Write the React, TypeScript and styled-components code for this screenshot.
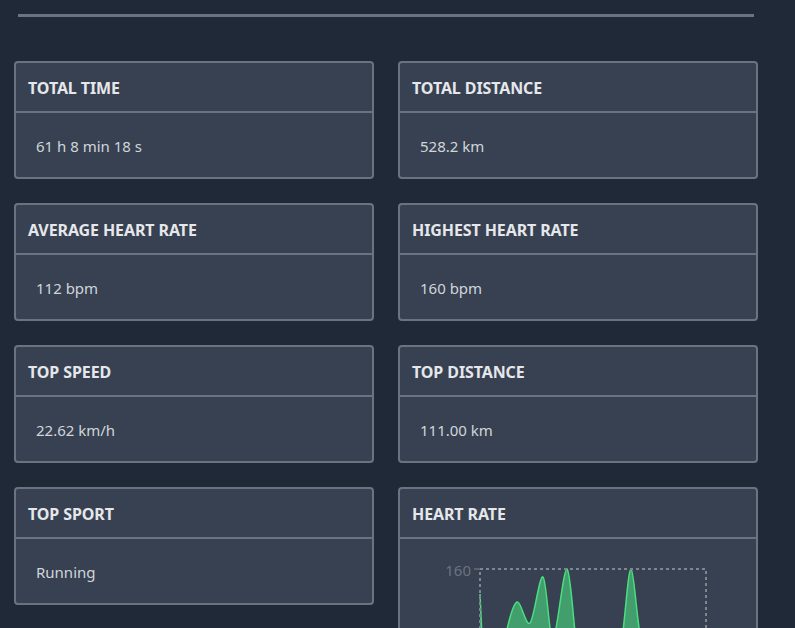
import React from "react";
import styled, { createGlobalStyle } from "styled-components";

const Global = createGlobalStyle`
  html, body { margin: 0; padding: 0; background: #1f2937; }
  body { font-family: "Noto Sans", "Open Sans", sans-serif; }
`;

const Page = styled.div`
  padding: 14px 14px 40px 14px;
  width: 744px;
`;

const Rule = styled.div`
  height: 3px;
  margin: 0 4px;
  background: #6b7280;
`;

const Grid = styled.div`
  margin-top: 44px;
  display: grid;
  grid-template-columns: 360px 360px;
  column-gap: 24px;
  row-gap: 24px;
  align-items: start;
`;

const Card = styled.div`
  background: #374151;
  border: 2px solid #6b7280;
  border-radius: 4px;
  box-sizing: border-box;
`;

const CardHeader = styled.div`
  height: 50px;
  box-sizing: border-box;
  display: flex;
  align-items: center;
  padding: 2px 12px 0 12px;
  border-bottom: 2px solid #6b7280;
  color: #e5e7eb;
  font-weight: 700;
  font-size: 16px;
  letter-spacing: -0.1px;
  text-transform: uppercase;
`;

const CardBody = styled.div`
  height: 64px;
  box-sizing: border-box;
  padding: 2px 20px 0 20px;
  display: flex;
  align-items: center;
  color: #d1d5db;
  font-size: 15px;
`;

const ChartBody = styled.div`
  height: 260px;
`;

const stats: [string, string][] = [
  ["Total time", "61 h 8 min 18 s"],
  ["Total distance", "528.2 km"],
  ["Average heart rate", "112 bpm"],
  ["Highest heart rate", "160 bpm"],
  ["Top speed", "22.62 km/h"],
  ["Top distance", "111.00 km"],
  ["Top sport", "Running"],
];

const pts: [number, number][] = [
  [80, 55], [85, 140], [95, 165], [106, 95], [117, 63], [130, 84], [143, 38],
  [153, 100], [167, 30], [178, 115], [195, 170], [214, 160], [223, 92], [231, 30],
  [240, 95], [255, 170], [275, 150], [290, 180], [306, 140],
];

function spline(p: [number, number][]) {
  let d = `M${p[0][0]},${p[0][1]}`;
  for (let i = 0; i < p.length - 1; i++) {
    const p0 = p[i - 1] || p[i];
    const p1 = p[i];
    const p2 = p[i + 1];
    const p3 = p[i + 2] || p2;
    const t = 0.16;
    const c1x = p1[0] + (p2[0] - p0[0]) * t;
    let c1y = p1[1] + (p2[1] - p0[1]) * t;
    const c2x = p2[0] - (p3[0] - p1[0]) * t;
    let c2y = p2[1] - (p3[1] - p1[1]) * t;
    c1y = Math.max(30, c1y);
    c2y = Math.max(30, c2y);
    d += ` C${c1x},${c1y} ${c2x},${c2y} ${p2[0]},${p2[1]}`;
  }
  return d;
}

const HeartChart = () => {
  const line = spline(pts);
  const area = `${line} L306,230 L80,230 Z`;
  return (
    <svg width="356" height="260" viewBox="0 0 356 260">
      <path d={area} fill="#4ade80" fillOpacity={0.6} stroke="none" />
      <path d={line} fill="none" stroke="#4ade80" strokeWidth={1.5} />
      <rect x="80" y="30" width="226" height="200" fill="none" stroke="#80858e" strokeWidth={2} strokeDasharray="3 3" />
      <line x1="74" y1="30" x2="80" y2="30" stroke="#80858e" strokeWidth={1} />
      <text x="71" y="37" textAnchor="end" fill="#6b7280" fontSize="15" fontFamily="Noto Sans, sans-serif">160</text>
    </svg>
  );
};

export default function App() {
  return (
    <>
      <Global />
      <Page>
        <Rule />
        <Grid>
          {stats.map(([t, v]) => (
            <Card key={t}>
              <CardHeader>{t}</CardHeader>
              <CardBody>{v}</CardBody>
            </Card>
          ))}
          <Card>
            <CardHeader>Heart rate</CardHeader>
            <ChartBody>
              <HeartChart />
            </ChartBody>
          </Card>
        </Grid>
      </Page>
    </>
  );
}
